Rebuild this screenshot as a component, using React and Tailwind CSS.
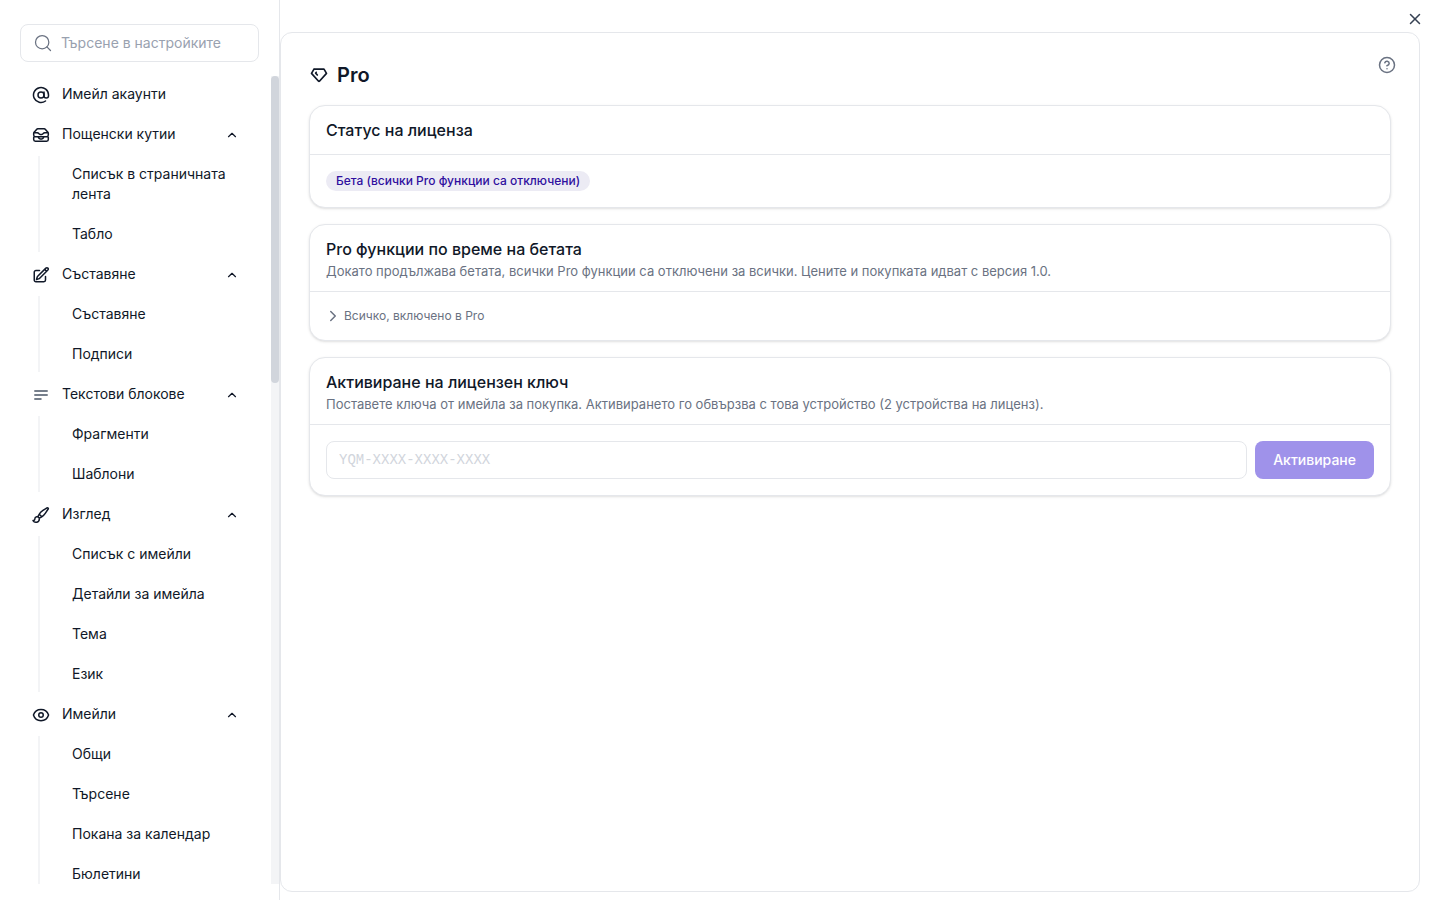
import { useState } from "react";
import { AtSign, ChevronRight, ChevronUp, CircleHelp, Search, X } from "lucide-react";
import {
  HiOutlineBars3BottomLeft,
  HiOutlineEye,
  HiOutlineInboxStack,
  HiOutlinePaintBrush,
  HiOutlinePencilSquare,
} from "react-icons/hi2";
import { TbDiamond } from "react-icons/tb";

const sections = [
  { name: "Имейл акаунти", icon: AtSign, items: [] },
  {
    name: "Пощенски кутии",
    icon: HiOutlineInboxStack,
    items: ["Списък в страничната лента", "Табло"],
  },
  {
    name: "Съставяне",
    icon: HiOutlinePencilSquare,
    items: ["Съставяне", "Подписи"],
  },
  {
    name: "Текстови блокове",
    icon: HiOutlineBars3BottomLeft,
    muted: true,
    items: ["Фрагменти", "Шаблони"],
  },
  {
    name: "Изглед",
    icon: HiOutlinePaintBrush,
    items: ["Списък с имейли", "Детайли за имейла", "Тема", "Език"],
  },
  {
    name: "Имейли",
    icon: HiOutlineEye,
    items: ["Общи", "Търсене", "Покана за календар", "Бюлетини"],
  },
];

const Section = ({ section }) => {
  const [open, setOpen] = useState(true);
  const Icon = section.icon;
  const hasItems = section.items.length > 0;

  return (
    <li className="flex flex-col gap-1">
      <button
        type="button"
        onClick={() => setOpen(!open)}
        className="flex w-full items-center gap-3 py-2 pr-2 pl-3 text-left"
      >
        <Icon
          className={`mt-0.5 size-[18px] shrink-0 ${
            section.muted ? "text-gray-600" : ""
          }`}
          strokeWidth={2}
        />
        <span className="grow">{section.name}</span>
        {hasItems && (
          <ChevronUp
            className={`mt-0.5 size-3.5 ${open ? "" : "rotate-180"}`}
            strokeWidth={2}
          />
        )}
      </button>
      {hasItems && open && (
        <ul className="ml-[18px] flex flex-col gap-1 border-l-2 border-gray-100">
          {section.items.map((item) => (
            <li key={item}>
              <a href="#" className="block py-2 pr-1 pl-8">
                {item}
              </a>
            </li>
          ))}
        </ul>
      )}
    </li>
  );
};

const Card = ({ title, description, children }) => (
  <section className="rounded-2xl border border-gray-200 bg-white shadow-sm">
    <header className="border-b border-gray-200 px-4 py-3">
      <h2 className="text-base font-medium">{title}</h2>
      {description && (
        <p className="mt-0.5 text-[13px]/4 text-gray-500">{description}</p>
      )}
    </header>
    <div className="p-4">{children}</div>
  </section>
);

export default function App() {
  const [key, setKey] = useState("");

  return (
    <div
      lang="bg"
      className="flex h-screen bg-white font-['Inter','Noto_Sans',sans-serif] text-sm text-gray-900"
    >
      <aside className="flex w-[280px] shrink-0 flex-col border-r border-gray-200 pt-6 pb-4">
        <label className="mx-5 flex h-[38px] shrink-0 items-center gap-2 rounded-lg border border-gray-200 px-3">
          <Search className="size-5 shrink-0 text-gray-500" strokeWidth={1.5} />
          <input
            type="text"
            aria-label="Търсене в настройките"
            placeholder="Търсене в настройките"
            className="w-full min-w-0 outline-none placeholder:text-gray-400"
          />
        </label>
        <div className="mt-3.5 flex min-h-0 grow">
          <nav className="min-w-0 grow overflow-hidden pr-6 pl-5">
            <ul className="flex flex-col gap-1">
              {sections.map((section) => (
                <Section key={section.name} section={section} />
              ))}
            </ul>
          </nav>
          <div className="w-2 shrink-0 bg-gray-100">
            <div className="h-[38%] rounded-full bg-gray-300" />
          </div>
        </div>
      </aside>

      <main className="flex min-w-0 grow flex-col pr-5 pb-2">
        <div className="flex h-8 shrink-0 items-center justify-end pt-1.5">
          <button type="button" aria-label="Затваряне" className="-mr-1">
            <X className="size-[18px] text-gray-700" strokeWidth={2} />
          </button>
        </div>
        <div className="grow rounded-xl border border-gray-200 px-7 pt-6">
          <div className="flex items-start justify-between">
            <h1 className="flex h-9 items-center gap-2 text-xl font-semibold">
              <TbDiamond className="size-5" strokeWidth={2} />
              Pro
            </h1>
            <button type="button" aria-label="Помощ" className="-mt-px -mr-[5px]">
              <CircleHelp className="size-[18px] text-gray-500" strokeWidth={2} />
            </button>
          </div>

          <div className="mt-3 flex flex-col gap-4">
            <Card title="Статус на лиценза">
              <span className="flex h-5 w-fit items-center rounded-full bg-[#ecebf4] px-2.5 text-xs font-medium text-[#2f0f9f]">
                Бета (всички Pro функции са отключени)
              </span>
            </Card>

            <Card
              title="Pro функции по време на бетата"
              description="Докато продължава бетата, всички Pro функции са отключени за всички. Цените и покупката идват с версия 1.0."
            >
              <button
                type="button"
                className="-ml-0.5 flex h-4 items-center gap-0.5 text-xs text-gray-500"
              >
                <ChevronRight className="size-[18px]" strokeWidth={2} />
                Всичко, включено в Pro
              </button>
            </Card>

            <Card
              title="Активиране на лицензен ключ"
              description="Поставете ключа от имейла за покупка. Активирането го обвързва с това устройство (2 устройства на лиценз)."
            >
              <form
                className="flex gap-2"
                onSubmit={(e) => e.preventDefault()}
              >
                <input
                  type="text"
                  aria-label="Лицензен ключ"
                  value={key}
                  onChange={(e) => setKey(e.target.value)}
                  placeholder="YQM-XXXX-XXXX-XXXX"
                  className="h-[38px] min-w-0 grow rounded-lg border border-gray-200 px-3 font-['Liberation_Mono',monospace] outline-none placeholder:text-gray-300"
                />
                <button
                  type="submit"
                  disabled={!key}
                  className="h-[38px] rounded-lg bg-[#9f92ea] px-[18px] font-medium text-white"
                >
                  Активиране
                </button>
              </form>
            </Card>
          </div>
        </div>
      </main>
    </div>
  );
}
